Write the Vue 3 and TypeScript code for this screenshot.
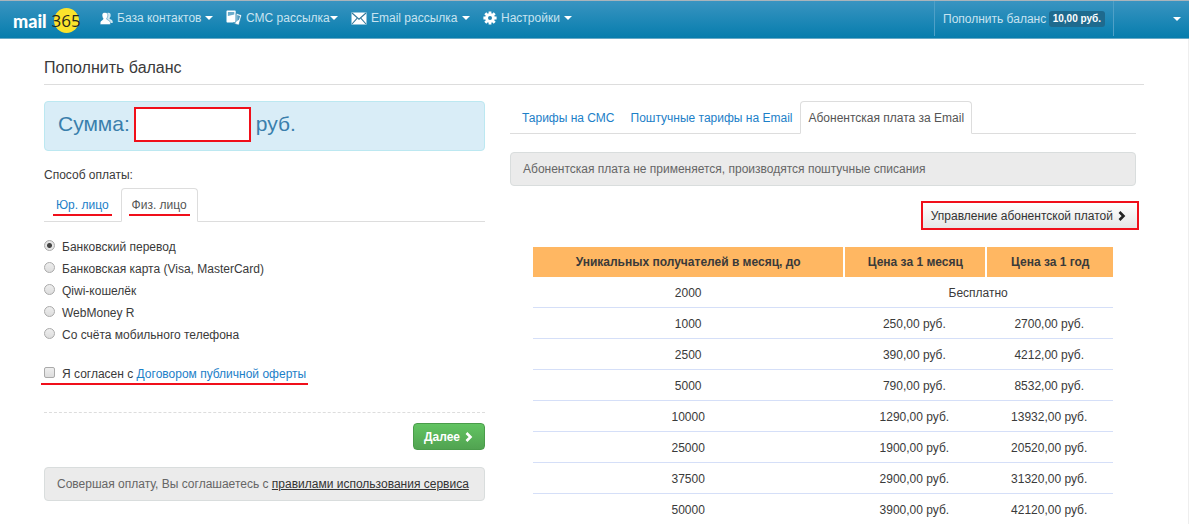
<script setup lang="ts">
import { ref } from 'vue'

interface PriceRow {
  count: string
  month: string
  year?: string
}

const amount = ref('')
const method = ref('bank')
const agreed = ref(false)

const methods = [
  { id: 'bank', label: 'Банковский перевод' },
  { id: 'card', label: 'Банковская карта (Visa, MasterCard)' },
  { id: 'qiwi', label: 'Qiwi-кошелёк' },
  { id: 'webmoney', label: 'WebMoney R' },
  { id: 'mobile', label: 'Со счёта мобильного телефона' },
]

const prices: PriceRow[] = [
  { count: '2000', month: 'Бесплатно' },
  { count: '1000', month: '250,00 руб.', year: '2700,00 руб.' },
  { count: '2500', month: '390,00 руб.', year: '4212,00 руб.' },
  { count: '5000', month: '790,00 руб.', year: '8532,00 руб.' },
  { count: '10000', month: '1290,00 руб.', year: '13932,00 руб.' },
  { count: '25000', month: '1900,00 руб.', year: '20520,00 руб.' },
  { count: '37500', month: '2900,00 руб.', year: '31320,00 руб.' },
  { count: '50000', month: '3900,00 руб.', year: '42120,00 руб.' },
]
</script>

<template>
  <div class="page">
    <header class="navbar">
      <a class="logo" href="#">
        <span class="logo-word">mail</span>
        <span class="logo-badge"><span class="logo-number">365</span></span>
      </a>
      <nav class="menu">
        <a class="menu-item contacts" href="#">
          <svg width="13" height="13" viewBox="0 0 13 13" fill="#fff">
            <path opacity=".8" d="M7 1.200c2.200-1 4.100.2 3.600 2.700-.1 1-.8 1.800-1.100 2.300 0 1 3 1.300 3.200 3.200V11H7z" />
            <path stroke="#2582ae" stroke-width=".5" d="M4.900.4C7.300.4 8.100 2 7.800 4 7.700 5.300 6.800 6 6.700 6.900c.2 1.300 3.500 1.400 3.700 3.500v2.200H.2v-2.200C.4 8.300 3 8.200 3.200 6.900 3 6 2.200 5.300 2.100 4 1.800 2 2.600.4 4.900.4z" />
          </svg>
          <span>База контактов</span><i class="caret"></i>
        </a>
        <a class="menu-item sms" href="#">
          <svg width="16" height="16" viewBox="0 0 16 16">
            <path fill="#fff" d="M1.500.5h7.200c.6 0 1 .4 1 1v10c0 .6-.4 1-1 1H1.500c-.6 0-1-.4-1-1v-10c0-.6.4-1 1-1z" />
            <path fill="#6aaccb" d="M1.900 1.900h6.400v2.600l-6.400 1.500z" />
            <path fill="#fff" stroke="#2582ae" stroke-width=".7" d="M10.200 3.300l4.700 1.400c.5.200.8.600.6 1.100l-2.400 8.500c-.2.600-.6.800-1.100.6l-4.900-1.900 2.300-.7c.5-.2.800-.7.800-1.300z" />
            <path fill="#4e9ac0" d="M11.200 5l3 .9-1.200 3.900-1.800 1.200z" />
          </svg>
          <span>СМС рассылка</span><i class="caret"></i>
        </a>
        <a class="menu-item email" href="#">
          <svg width="16" height="13" viewBox="0 0 16 13">
            <path fill="#fff" d="M.5.500h15v12H.5z" />
            <path fill="none" stroke="#33799c" stroke-width="1.100" d="M1 1l7 6.200L15 1M1 12l5-5.600M15 12l-5-5.600" />
          </svg>
          <span>Email рассылка</span><i class="caret"></i>
        </a>
        <a class="menu-item" href="#">
          <svg width="14" height="14" viewBox="0 0 14 14">
            <g stroke="#fff" stroke-width="2.800">
              <path d="M7 .4v13.200M.4 7h13.200M2.300 2.300l9.400 9.400M11.700 2.300l-9.400 9.400" />
            </g>
            <circle cx="7" cy="7" r="4.800" fill="#fff" />
            <circle cx="7" cy="7" r="2" fill="#2785b2" />
          </svg>
          <span>Настройки</span><i class="caret"></i>
        </a>
      </nav>
      <a class="balance" href="#">Пополнить баланс <b class="badge">10,00 руб.</b></a>
      <button class="account" type="button" aria-label="Аккаунт"><i class="caret"></i></button>
    </header>

    <main class="content">
      <h1>Пополнить баланс</h1>
      <div class="columns">
        <form class="payment" @submit.prevent>
          <div class="sum">
            <label for="amount">Сумма:</label>
            <input id="amount" v-model="amount" type="text" />
            <span>руб.</span>
          </div>

          <p class="caption">Способ оплаты:</p>
          <div class="tabs payer">
            <a class="tab" href="#"><span>Юр. лицо</span></a>
            <a class="tab active" href="#"><span>Физ. лицо</span></a>
          </div>

          <div class="methods">
            <label v-for="m in methods" :key="m.id" class="option">
              <input v-model="method" type="radio" name="method" :value="m.id" />
              <span>{{ m.label }}</span>
            </label>
          </div>

          <div class="agree">
            <input id="agree" v-model="agreed" type="checkbox" />
            <label for="agree">Я согласен с <a href="#">Договором публичной оферты</a></label>
          </div>

          <div class="actions">
            <button class="next" type="submit">
              Далее
              <svg width="8" height="10" viewBox="0 0 8 10"><path d="M1.500 1l4 4-4 4" fill="none" stroke="#fff" stroke-width="2.600" /></svg>
            </button>
          </div>

          <p class="notice">Совершая оплату, Вы соглашаетесь с <a href="#">правилами использования сервиса</a></p>
        </form>

        <section class="tariffs">
          <div class="tabs">
            <a class="tab" href="#">Тарифы на СМС</a>
            <a class="tab" href="#">Поштучные тарифы на Email</a>
            <a class="tab active" href="#">Абонентская плата за Email</a>
          </div>
          <p class="notice">Абонентская плата не применяется, производятся поштучные списания</p>
          <div class="manage-row">
            <button class="manage" type="button">
              Управление абонентской платой
              <svg width="8" height="10" viewBox="0 0 8 10"><path d="M1.500 1l4 4-4 4" fill="none" stroke="#222" stroke-width="2.600" /></svg>
            </button>
          </div>
          <table>
            <thead>
              <tr>
                <th class="col-count">Уникальных получателей в месяц, до</th>
                <th class="col-month">Цена за 1 месяц</th>
                <th>Цена за 1 год</th>
              </tr>
            </thead>
            <tbody>
              <tr v-for="row in prices" :key="row.count">
                <td>{{ row.count }}</td>
                <td :colspan="row.year ? 1 : 2">{{ row.month }}</td>
                <td v-if="row.year">{{ row.year }}</td>
              </tr>
            </tbody>
          </table>
        </section>
      </div>
    </main>
  </div>
</template>

<style>
body {
  margin: 0;
  background: #fff;
}
</style>

<style scoped>
* {
  box-sizing: border-box;
}
.page {
  min-height: 100vh;
  font: 12px/18px "Liberation Sans", Arial, sans-serif;
  color: #3a3a3a;
}
a {
  color: #1c80c8;
  text-decoration: none;
}
.navbar {
  display: flex;
  height: 39px;
  border-top: 1px solid #aab4bb;
  border-bottom: 1px solid #67a9c6;
  background: linear-gradient(#3994c1, #067dad);
}
.logo {
  display: flex;
  align-items: center;
  gap: 7px;
  padding: 2px 0 0 13px;
  width: 100px;
  color: #fff;
}
.logo-word {
  font: 900 18px/24px Lato, sans-serif;
}
.logo-badge {
  display: flex;
  align-items: center;
  justify-content: center;
  width: 25px;
  height: 25px;
  border-radius: 50%;
  background: #fbe32c;
}
.logo-number {
  font: 17px/24px "Open Sans", sans-serif;
  color: #26261c;
}
.menu {
  display: flex;
  flex: 1;
}
.menu-item {
  display: flex;
  align-items: center;
  gap: 4px;
  height: 34px;
  color: #c8e3f0;
  white-space: nowrap;
}
.contacts {
  width: 126px;
}
.sms {
  width: 125px;
}
.sms .caret {
  margin-left: -4px;
}
.email {
  width: 132px;
}
.caret {
  width: 0;
  height: 0;
  border: 4px solid transparent;
  border-top-color: #fff;
  border-bottom: 0;
}
.balance {
  display: flex;
  flex: none;
  align-items: center;
  justify-content: space-between;
  width: 180px;
  height: 35px;
  padding: 0 8px;
  border-left: 1px solid #4fa0c7;
  border-right: 1px solid #4fa0c7;
  color: #c8e3f0;
  white-space: nowrap;
}
.badge {
  padding: 0 4px;
  border-radius: 3px;
  background: #1e6a8e;
  color: #fff;
  font-size: 10px;
  line-height: 16px;
}
.account {
  display: flex;
  flex: none;
  align-items: center;
  justify-content: flex-end;
  width: 75px;
  height: 35px;
  padding: 0 8px 0 0;
  border: 0;
  background: none;
}
.content {
  min-height: calc(100vh - 39px);
  padding: 18px 44px 0;
  border-right: 1px solid #eee;
}
h1 {
  margin: 0;
  padding-bottom: 5px;
  border-bottom: 1px solid #ddd;
  font-size: 16px;
  line-height: 22px;
  font-weight: normal;
}
.columns {
  display: grid;
  grid-template-columns: 441fr 626fr;
  gap: 25px;
  padding: 16px 8px 0 0;
}
.sum {
  display: flex;
  align-items: center;
  gap: 4px;
  height: 50px;
  padding: 0 13px 4px;
  border: 1px solid #bce8f1;
  border-radius: 4px;
  background: #d9edf7;
  color: #3a7fac;
  font-size: 21px;
  line-height: 26px;
}
.sum input {
  width: 117px;
  height: 35px;
  margin-right: 1px;
  padding: 0 6px;
  border: 2px solid #f00f1a;
  background: #fff;
  color: #444;
  font: inherit;
}
.caption {
  margin: 15px 0 4px;
}
.tabs {
  display: flex;
  padding-left: 4px;
  border-bottom: 1px solid #ddd;
}
.tab {
  height: 33px;
  margin-bottom: -1px;
  padding: 7px;
  border: 1px solid transparent;
  border-radius: 4px 4px 0 0;
  white-space: nowrap;
}
.tab.active {
  border-color: #ddd #ddd #fff;
  background: #fff;
  color: #555;
}
.payer {
  gap: 1px;
  padding-left: 1px;
}
.payer .tab {
  height: 34px;
}
.payer span {
  display: block;
  height: 20px;
  padding: 0 3px;
  border-bottom: 2px solid #f00f1a;
}
.methods {
  display: grid;
  gap: 4px;
  padding-top: 16px;
}
.option,
.agree {
  display: flex;
  align-items: center;
  gap: 7px;
}
.option input,
.agree input {
  appearance: none;
  flex: none;
  width: 11px;
  height: 11px;
  margin: 0 0 4px;
  border: 1px solid #aaa;
  background: linear-gradient(#eee, #ddd);
}
.option input {
  border-radius: 50%;
}
.option input:checked {
  background: radial-gradient(circle, #444 0 2px, #e6e6e6 3px);
}
.agree input {
  border-radius: 2px;
}
.agree {
  width: fit-content;
  margin: 21px 0 0 -3px;
  padding: 0 2px 0 3px;
  border-bottom: 2px solid #f00f1a;
}
.actions {
  display: flex;
  justify-content: flex-end;
  margin-top: 27px;
  padding-top: 10px;
  border-top: 1px dashed #ddd;
}
.next,
.manage {
  display: flex;
  align-items: center;
  gap: 5px;
  font: inherit;
}
.next {
  height: 27px;
  padding: 0 11px 0 10px;
  border: 1px solid #4a9c4a;
  border-radius: 4px;
  background: linear-gradient(#62c462, #51a351);
  color: #fff;
  font-weight: bold;
}
.notice {
  margin: 17px 0 0;
  padding: 7px 12px;
  border: 1px solid #d9dddd;
  border-radius: 4px;
  background: #ebebeb;
  color: #666;
}
.notice a {
  color: #333;
  text-decoration: underline;
}
.tariffs .notice {
  margin-top: 18px;
}
.manage-row {
  display: flex;
  justify-content: flex-end;
  margin: 15px -3px 17px 0;
}
.manage {
  height: 29px;
  padding: 0 11px 0 8px;
  border: 2px solid #f00f1a;
  background: linear-gradient(#fff, #e6e6e6);
  color: #333;
}
table {
  width: calc(100% - 46px);
  margin-left: 23px;
  border-collapse: separate;
  border-spacing: 0;
  table-layout: fixed;
  text-align: center;
}
th {
  height: 30px;
  padding: 0;
  border-left: 2px solid #fff;
  background: #ffb762;
}
th:first-child {
  border-left: 0;
}
.col-count {
  width: 53.5%;
}
.col-month {
  width: 24.5%;
}
td {
  height: 31px;
  padding: 2px 0 0;
  border-bottom: 1px solid #d5dff8;
}
tbody tr:last-child td {
  height: 30px;
  border-bottom: 0;
}
</style>
